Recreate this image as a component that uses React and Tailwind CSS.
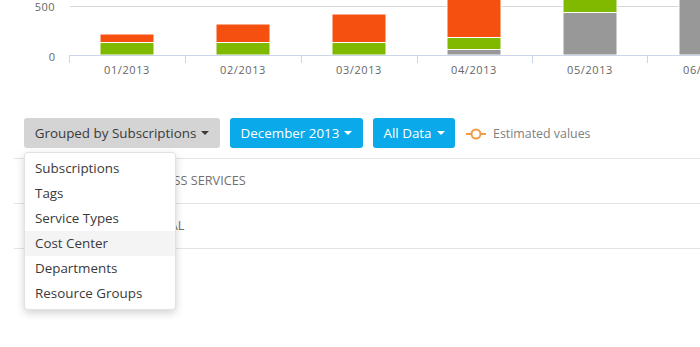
import React from 'react';

const ORANGE = '#f5500f';
const GREEN = '#7fba00';
const GRAY = '#989898';

// bars: [x, segments [y0, y1, color]]
const bars = [
  { x: 100, label: '01/2013', segs: [[34, 42.5, ORANGE], [42.5, 55, GREEN]] },
  { x: 216, label: '02/2013', segs: [[24, 42.5, ORANGE], [42.5, 55, GREEN]] },
  { x: 332, label: '03/2013', segs: [[14, 42.5, ORANGE], [42.5, 55, GREEN]] },
  { x: 447, label: '04/2013', segs: [[-2, 37.5, ORANGE], [37.5, 49.5, GREEN], [49.5, 55, GRAY]] },
  { x: 563, label: '05/2013', segs: [[-2, 12.5, GREEN], [12.5, 55, GRAY]] },
  { x: 679, label: '06/2013', segs: [[-2, 55, GRAY]] },
];

const Chart = () => (
  <svg width="700" height="90" className="block">
    <line x1="70" y1="6.5" x2="700" y2="6.5" stroke="#d8d8d8" strokeWidth="1" />
    <text x="55" y="11" textAnchor="end" fontSize="11" fill="#666" fontFamily="Open Sans" letterSpacing="0.5">500</text>
    <text x="55" y="61" textAnchor="end" fontSize="11" fill="#666" fontFamily="Open Sans">0</text>
    {bars.map((b) => (
      <g key={b.label}>
        {b.segs.map(([y0, y1, c], i) => (
          <rect key={i} x={b.x} y={y0} width="54" height={y1 - y0} fill={c} stroke="#fff" strokeWidth="1" />
        ))}
        <text x={b.x + 27} y="74" textAnchor="middle" fontSize="11" fill="#666" fontFamily="Open Sans" letterSpacing="0.6">
          {b.label}
        </text>
      </g>
    ))}
    <line x1="69" y1="55.5" x2="700" y2="55.5" stroke="#ccd6eb" strokeWidth="1" />
    {[69.5, 185.5, 301.5, 417.5, 532.5, 647.5].map((x) => (
      <line key={x} x1={x} y1="55" x2={x} y2="63" stroke="#ccd6eb" strokeWidth="1" />
    ))}
  </svg>
);

const Caret = ({ color }) => (
  <svg width="8" height="4" viewBox="0 0 8 4" className="ml-[5px] inline-block">
    <path d="M0 0 L8 0 L4 4 Z" fill={color} />
  </svg>
);

const menuItems = ['Subscriptions', 'Tags', 'Service Types', 'Cost Center', 'Departments', 'Resource Groups'];

const App = () => {
  return (
    <div className="w-[700px] h-[347px] bg-white overflow-hidden font-['Open_Sans',sans-serif]">
      <Chart />

      <div className="mt-[28px] pl-[24px] flex items-center gap-[10px] relative">
        <div className="relative">
          <button className="h-[30px] w-[196px] rounded-[3px] bg-[#d4d4d4] text-[#3a3a3a] text-[13.4px] flex items-center justify-center">
            Grouped by Subscriptions
            <Caret color="#3a3a3a" />
          </button>
          <div className="absolute left-0 top-[34px] w-[152px] bg-white rounded-[4px] border border-[#e2e2e2] shadow-[0_3px_8px_rgba(0,0,0,0.18)] py-[3px] z-10">
            {menuItems.map((item) => (
              <div
                key={item}
                className={`h-[25px] px-[10px] flex items-center text-[13.4px] text-[#3a3a3a] ${
                  item === 'Cost Center' ? 'bg-[#f4f4f4]' : ''
                }`}
              >
                {item}
              </div>
            ))}
          </div>
        </div>
        <button className="h-[30px] w-[133px] rounded-[3px] bg-[#0aa9ea] text-white text-[13.4px] flex items-center justify-center">
          December 2013
          <Caret color="#fff" />
        </button>
        <button className="h-[30px] w-[82px] rounded-[3px] bg-[#0aa9ea] text-white text-[13.4px] flex items-center justify-center">
          All Data
          <Caret color="#fff" />
        </button>
        <div className="flex items-center ml-[1px] mt-[3px]">
          <svg width="20" height="12" viewBox="0 0 20 12">
            <line x1="0" y1="6" x2="20" y2="6" stroke="#f39a45" strokeWidth="2" />
            <circle cx="10" cy="6" r="4.5" fill="#fff" stroke="#f39a45" strokeWidth="2" />
          </svg>
          <span className="ml-[7px] text-[12.4px] text-[#808080]">Estimated values</span>
        </div>
      </div>

      <div className="mt-[10px] ml-[14px] border-t border-[#e4e4e4]">
        <div className="h-[45px] border-b border-[#e4e4e4] flex items-center">
          <div className="ml-[10px] w-[3px] h-[20px] bg-[#f5500f]" />
          <span className="ml-[102px] text-[12.7px] text-[#707070] uppercase">Business Services</span>
        </div>
        <div className="h-[45px] border-b border-[#e4e4e4] flex items-center">
          <div className="ml-[10px] w-[3px] h-[20px] bg-[#7fba00]" />
          <span className="ml-[102px] text-[12.7px] text-[#707070] uppercase">General</span>
        </div>
      </div>
    </div>
  );
};

export default App;
